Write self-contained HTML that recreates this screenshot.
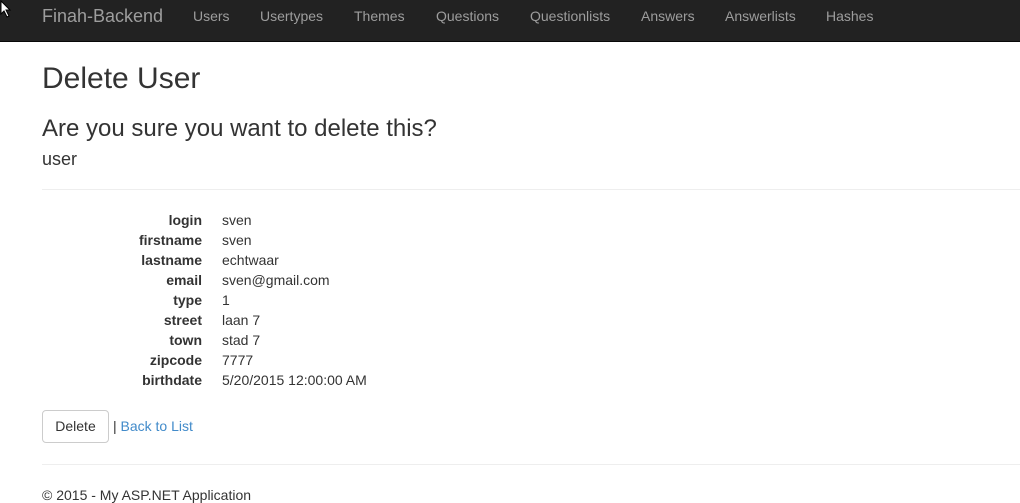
<!DOCTYPE html>
<html><head><style>
body{margin:0;width:1020px;height:502px;overflow:hidden;font-family:"Liberation Sans",sans-serif;font-size:14px;color:#333;background:#fff;position:relative}
.a{position:absolute;white-space:nowrap}
.nav{position:absolute;left:0;top:0;width:1020px;height:41px;background:#222;border-bottom:1px solid #080808}
.nav span{position:absolute;top:8px;color:#9d9d9d;font-size:14px}
hr{position:absolute;left:42px;width:978px;margin:0;border:0;border-top:1px solid #eee}
.l{position:absolute;right:818px;font-weight:bold;white-space:nowrap}
.v{position:absolute;left:222px;white-space:nowrap}
</style></head><body>
<div class="nav">
<span style="left:42px;top:6px;font-size:18px">Finah-Backend</span>
<span style="left:193px">Users</span>
<span style="left:260px">Usertypes</span>
<span style="left:354px">Themes</span>
<span style="left:436px">Questions</span>
<span style="left:530px">Questionlists</span>
<span style="left:641px">Answers</span>
<span style="left:725px">Answerlists</span>
<span style="left:826px">Hashes</span>
</div>
<svg class="a" style="left:0;top:0" width="12" height="18"><path d="M1 1 L1 14 L4 11 L7 17 L9 16 L6 10 L10 10 Z" fill="#fff" stroke="#000" stroke-width="1"/></svg>
<div class="a" style="left:42px;top:62px;font-size:30px">Delete User</div>
<div class="a" style="left:42px;top:115px;font-size:24px">Are you sure you want to delete this?</div>
<div class="a" style="left:42px;top:149px;font-size:18px">user</div>
<hr style="top:189px">
<div class="l" style="top:212px">login</div><div class="v" style="top:212px">sven</div>
<div class="l" style="top:232px">firstname</div><div class="v" style="top:232px">sven</div>
<div class="l" style="top:252px">lastname</div><div class="v" style="top:252px">echtwaar</div>
<div class="l" style="top:272px">email</div><div class="v" style="top:272px">sven@gmail.com</div>
<div class="l" style="top:292px">type</div><div class="v" style="top:292px">1</div>
<div class="l" style="top:312px">street</div><div class="v" style="top:312px">laan 7</div>
<div class="l" style="top:332px">town</div><div class="v" style="top:332px">stad 7</div>
<div class="l" style="top:352px">zipcode</div><div class="v" style="top:352px">7777</div>
<div class="l" style="top:372px">birthdate</div><div class="v" style="top:372px">5/20/2015 12:00:00 AM</div>
<div class="a" style="left:42px;top:410px;width:65px;height:31px;border:1px solid #ccc;border-radius:4px;text-align:center;line-height:31px">Delete</div>
<div class="a" style="left:113px;top:418px">| <span style="color:#428bca">Back to List</span></div>
<hr style="top:464px">
<div class="a" style="left:42px;top:487px">© 2015 - My ASP.NET Application</div>
</body></html>
